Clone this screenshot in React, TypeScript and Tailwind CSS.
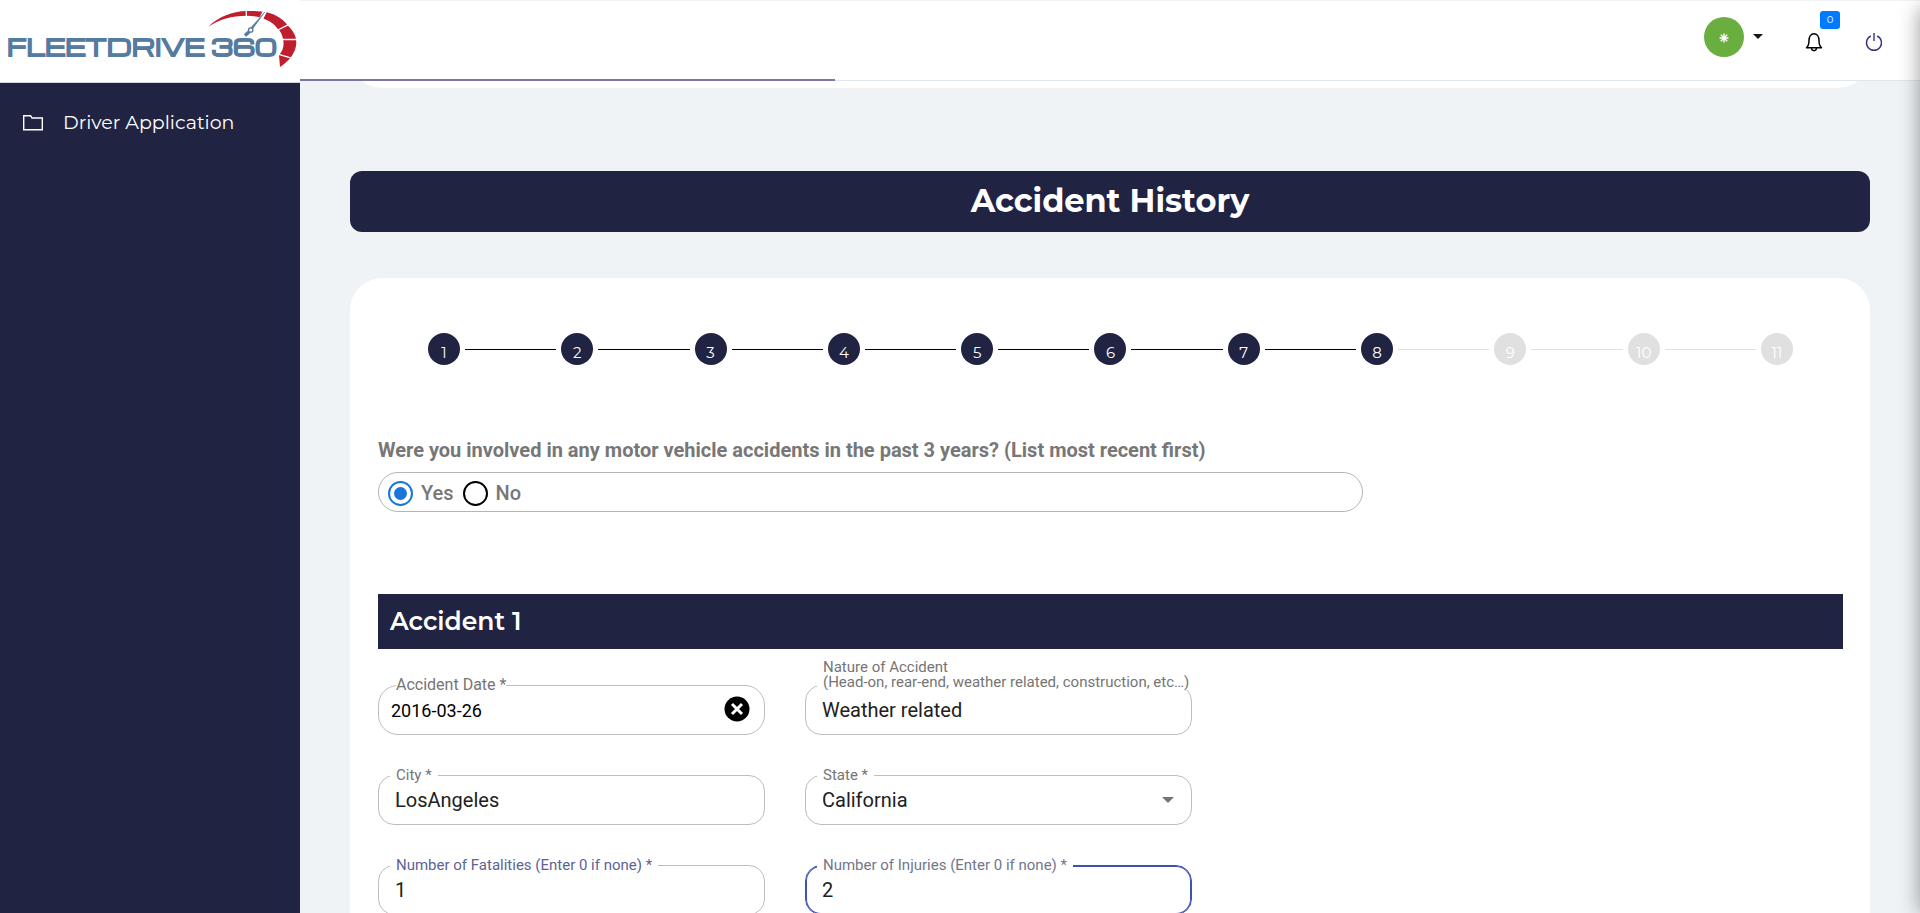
import { type ReactNode } from "react";

const brandFont = "font-[Montserrat,Inter,sans-serif]";

const menu = [{ label: "Driver Application", href: "#driver-application" }];
const steps = [1, 2, 3, 4, 5, 6, 7, 8, 9, 10, 11];
const currentStep = 8;

function Gauge() {
  return (
    <svg viewBox="0 0 94 60" className="absolute right-0.5 top-2.5 h-[60px] w-[94px]" aria-hidden="true">
      <path
        d="M4.300 16.700C15 6.500 28 1.400 42.700 1C50 0.800 57 1 62.700 2.300C72 4.500 79 9 83.300 15C89 20.500 92.500 26 92.300 33C92 42 86 50.500 76 57L75 45C79 41 80.500 35 79 29C78 24 76.500 21 73 18C70 14 67 12 62.700 10C57 7 50 5.800 42.700 5.700C28 5.700 15 9.500 4.300 16.700Z"
        fill="#bf1e2e"
      />
      <path d="M42.300 0V8M84.500 14.700L71 21.500M93.500 29.500H77M88.500 48.300L73 43.800" stroke="#fff" strokeWidth="1.300" />
      <path d="M61.500 0L56 11" stroke="#fff" strokeWidth="4" />
      <path d="M60.800 2L48.500 19L46.800 17.800Z" fill="#557ba1" stroke="#557ba1" strokeWidth="0.600" />
      <path d="M45.500 21.500L41 25.500" stroke="#557ba1" strokeWidth="3.500" />
      <circle cx="46.700" cy="20" r="2.200" fill="#fff" stroke="#557ba1" strokeWidth="1.300" />
    </svg>
  );
}

function Logo() {
  return (
    <a href="#home" className="relative flex h-[83px] items-center border-b border-gray-300 bg-white pl-[7px] pt-2.5">
      <span className="whitespace-nowrap font-[Michroma,Orbitron,Montserrat,sans-serif] text-[23px] font-bold leading-8 text-[#557ba1] [-webkit-text-stroke:1px_#557ba1]">
        FLEETDRIVE 360
      </span>
      <Gauge />
    </a>
  );
}

function Sidebar() {
  return (
    <aside className="w-[300px] shrink-0 bg-[#212343]">
      <Logo />
      <nav className="pt-5">
        {menu.map((item) => (
          <a key={item.label} href={item.href} className={`flex h-10 items-center gap-5 pl-[23px] text-[19px] text-white ${brandFont}`}>
            <svg viewBox="0 0 20 16" className="h-4 w-5" fill="none" stroke="currentColor" strokeWidth="1.400" aria-hidden="true">
              <path d="M0.700 14.800V0.700H7.500L9 3H19.300V14.800Z" />
            </svg>
            {item.label}
          </a>
        ))}
      </nav>
    </aside>
  );
}

function Header() {
  return (
    <header className="relative z-10 flex h-20 items-center justify-end border-b border-[#dfe7ee] bg-white pr-[37px]">
      <button type="button" aria-label="Account" className="flex items-center gap-[9px] pb-2">
        <span className="flex size-10 items-center justify-center rounded-full bg-[#69ae3f] text-white">
          <svg viewBox="0 0 10 10" className="mt-0.5 size-2.5" stroke="currentColor" strokeWidth="1.400" aria-hidden="true">
            <path d="M5 0.500V9.500M0.500 5H9.500M1.800 1.800L8.200 8.200M8.200 1.800L1.800 8.200" />
          </svg>
        </span>
        <svg viewBox="0 0 10 5" className="h-[5px] w-2.5" aria-hidden="true">
          <path d="M0 0H10L5 5Z" fill="#16161f" />
        </svg>
      </button>
      <button type="button" aria-label="Notifications" className="relative ml-[42px] pt-0.5">
        <svg viewBox="0 0 18 20" className="h-5 w-[18px]" fill="none" stroke="#000" strokeWidth="1.500" strokeLinejoin="round" aria-hidden="true">
          <path d="M1.500 15.700H16.500C14.500 14 14 12 14 8.500C14 4.500 12 1.700 9 1.700C6 1.700 4 4.500 4 8.500C4 12 3.500 14 1.500 15.700Z" />
          <path d="M6.500 16C6.800 19.500 11.200 19.500 11.500 16" />
        </svg>
        <span className={`absolute bottom-[23px] left-[15px] flex h-[18px] w-5 items-center justify-center rounded-[3px] bg-[#007bff] text-[10px] text-white ${brandFont}`}>
          0
        </span>
      </button>
      <button type="button" aria-label="Log out" className="ml-[42px] pt-0.5">
        <svg viewBox="0 0 18 20" className="h-5 w-[18px]" fill="none" stroke="#35357d" strokeWidth="1.400" aria-hidden="true">
          <path d="M9 1V9M5.800 4A7.500 7.500 0 1 0 12.200 4" />
        </svg>
      </button>
      <span className="absolute left-0 top-[78px] h-0.5 w-[33%] bg-[#7a77a8]" />
    </header>
  );
}

function Stepper() {
  return (
    <ol className={`flex items-center gap-[5px] px-[50px] text-[15px] text-white ${brandFont}`}>
      {steps.map((step) => (
        <li key={step} className={step === 1 ? "flex items-center" : "flex flex-1 items-center gap-[5px]"}>
          {step > 1 && <span className={`h-px flex-1 ${step <= currentStep ? "bg-black" : "bg-[#e0e0e0]"}`} />}
          <span className={`flex size-8 items-center justify-center rounded-full pt-2 ${step <= currentStep ? "bg-[#212343]" : "bg-[#e0e0e0]"}`}>
            {step}
          </span>
        </li>
      ))}
    </ol>
  );
}

function Radio({ label, checked }: { label: string; checked?: boolean }) {
  return (
    <label className="flex items-center gap-2">
      <input
        type="radio"
        name="accidents"
        defaultChecked={checked}
        className="size-[25px] appearance-none rounded-full border-2 border-black bg-clip-content p-1 checked:border-[#1976d8] checked:bg-[#1976d8]"
      />
      {label}
    </label>
  );
}

type FieldProps = {
  id: string;
  label: ReactNode;
  frame?: string;
  legend?: string;
  children: ReactNode;
};

function Field({
  id,
  label,
  frame = "rounded-2xl border-[#bdbdbd]",
  legend = "bottom-[41px] left-[11px] px-1.5 text-[15px] text-[#757575]",
  children,
}: FieldProps) {
  return (
    <div className={`relative flex h-[50px] items-center border ${frame}`}>
      <label htmlFor={id} className={`absolute whitespace-nowrap bg-white leading-[15px] ${legend}`}>
        {label}
      </label>
      {children}
    </div>
  );
}

const control = "h-full w-full rounded-2xl bg-transparent px-4 text-xl text-[#212121] outline-none";

export default function App() {
  return (
    <div className="relative flex h-screen overflow-hidden bg-[#eff3f6] font-[Roboto,sans-serif]">
      <Sidebar />
      <div className="flex min-w-0 flex-1 flex-col pt-px">
        <Header />
        <main className="min-h-0 flex-1 overflow-hidden px-[50px]">
          <div className="-mt-14 h-[63px] rounded-b-[32px] bg-white" />
          <h1 className={`mt-[83px] rounded-xl bg-[#212343] pb-0.5 text-center text-[32px] font-bold leading-[59px] text-white ${brandFont}`}>
            Accident History
          </h1>
          <form className="mt-[46px] rounded-t-[32px] bg-white pl-7 pr-[27px] pt-[55px]">
            <Stepper />
            <fieldset className="mt-[71px] text-xl font-medium text-[#777]">
              <legend className="font-bold leading-7">
                Were you involved in any motor vehicle accidents in the past 3 years? (List most recent first)
              </legend>
              <div className="mt-2 flex h-10 w-[985px] max-w-full items-center gap-[9px] rounded-[20px] border border-[#b5b5b5] px-[9px] pt-0.5">
                <Radio label="Yes" checked />
                <Radio label="No" />
              </div>
            </fieldset>
            <h2 className={`mt-[82px] bg-[#212343] px-3 text-[25px] font-semibold leading-[55px] text-white ${brandFont}`}>Accident 1</h2>
            <div className="mt-9 grid grid-cols-[387px_387px] gap-10">
              <Field
                id="date"
                label="Accident Date *"
                frame="rounded-[20px] border-[#bdbdbd]"
                legend="bottom-[42px] left-[17px] text-base text-[#757575]"
              >
                <input id="date" defaultValue="2016-03-26" className="h-full min-w-0 flex-1 bg-transparent pl-3 text-lg text-black outline-none" />
                <button type="button" aria-label="Clear date" className="mb-0.5 mr-3.5">
                  <svg viewBox="0 0 26 26" className="size-[26px]" aria-hidden="true">
                    <circle cx="13" cy="13" r="12.500" />
                    <path d="M8 8L18 18M18 8L8 18" stroke="#fff" strokeWidth="3" />
                  </svg>
                </button>
              </Field>
              <Field
                id="nature"
                label={<>Nature of Accident<br />(Head-on, rear-end, weather related, construction, etc…)</>}
                legend="bottom-11 left-[11px] px-1.5 text-[15px] text-[#757575]"
              >
                <input id="nature" defaultValue="Weather related" className={control} />
              </Field>
              <Field id="city" label="City *">
                <input id="city" defaultValue="LosAngeles" className={control} />
              </Field>
              <Field id="state" label="State *">
                <select id="state" defaultValue="California" className={`appearance-none ${control}`}>
                  <option>California</option>
                </select>
                <svg viewBox="0 0 12 6" className="pointer-events-none absolute right-[17px] h-1.5 w-3" aria-hidden="true">
                  <path d="M0 0H12L6 6Z" fill="#757575" />
                </svg>
              </Field>
              <Field
                id="fatalities"
                label="Number of Fatalities (Enter 0 if none) *"
                legend="bottom-[41px] left-[11px] px-1.5 text-[15px] text-[#5c6395]"
              >
                <input id="fatalities" defaultValue="1" className={control} />
              </Field>
              <Field
                id="injuries"
                label="Number of Injuries (Enter 0 if none) *"
                frame="rounded-2xl border-[#3f51b5] ring-1 ring-inset ring-[#3f51b5]"
                legend="bottom-[41px] left-[11px] px-1.5 text-[15px] text-[#73768c]"
              >
                <input id="injuries" defaultValue="2" className={control} />
              </Field>
            </div>
          </form>
        </main>
      </div>
      <aside aria-hidden="true" className="absolute bottom-0 left-full top-2 z-20 w-80 bg-white shadow-[0_0_20px_rgba(0,0,0,0.4)]" />
    </div>
  );
}
